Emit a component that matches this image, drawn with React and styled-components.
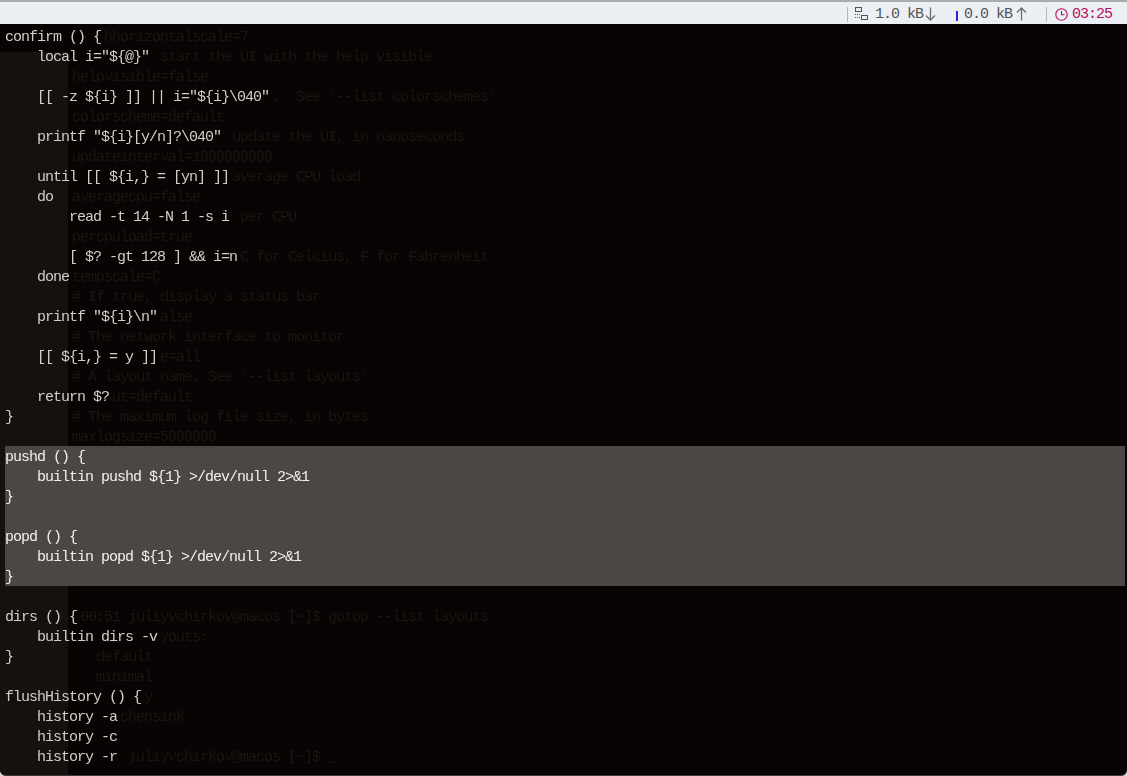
import styled, { createGlobalStyle } from "styled-components";

const CELL = 8;
const TEXT_X = 5;
const GHOST_X = 72;

const GlobalStyle = createGlobalStyle`
  html, body {
    margin: 0;
    padding: 0;
    background: #0a0303;
    overflow: hidden;
  }
`;

const Screen = styled.div`
  width: 1127px;
  height: 776px;
  display: flex;
  flex-direction: column;
  overflow: hidden;
  background: #d8dadd;
`;

const TopBar = styled.div`
  height: 24px;
  flex-shrink: 0;
  box-sizing: border-box;
  padding: 2px 15px 0 0;
  border-top: 2px solid #a9abad;
  background: #eceff4;
  display: flex;
  justify-content: flex-end;
  align-items: center;
  color: #50545a;
  font-family: "Liberation Mono", monospace;
  font-size: 15px;
  letter-spacing: -1px;
`;

const Widget = styled.div`
  display: flex;
  align-items: center;
  gap: ${(props) => props.$gap}px;
  margin-left: ${(props) => props.$left}px;
  white-space: pre;
  color: ${(props) => props.$color || "inherit"};
`;

const Divider = styled.span`
  width: 1px;
  height: 15px;
  margin-left: ${(props) => props.$left || 0}px;
  background: #b4b7bc;
`;

const Tick = styled.span`
  width: 2px;
  height: 10px;
  margin-top: 3px;
  margin-left: 20px;
  background: #3a20e0;
`;

const NetworkSvg = styled.svg`
  margin-right: 5px;
`;

const Terminal = styled.div`
  position: relative;
  flex: 1;
  overflow: hidden;
  background: #0a0303;
  border-bottom: 1px solid #3c3a3a;
  border-radius: 0 0 6px 6px;
  font-family: "Liberation Mono", monospace;
  font-size: 15px;
  letter-spacing: -1px;
  line-height: 20px;
`;

const BackdropEdge = styled.div`
  position: absolute;
  left: 0;
  top: 28px;
  bottom: 0;
  width: 68px;
  background: #16110f;
`;

const Code = styled.div`
  position: relative;
  padding: 4px 2px 0 ${TEXT_X}px;
`;

const Row = styled.div`
  display: flex;
  height: 20px;
  white-space: pre;
`;

const Main = styled.span`
  color: ${(props) => (props.$selected ? "#f2f0ec" : "#d2cec9")};
  filter: blur(0.3px);
`;

const Ghost = styled.span`
  color: #1b1513;
  filter: blur(0.3px);
`;

const Selection = styled.div`
  height: 140px;
  margin: -2px 0 2px;
  padding-top: 2px;
  box-sizing: border-box;
  background: #4b4745;
`;

const rows = [
  { text: "confirm () {", ghost: "hhorizontalscale=7", col: 4 },
  { text: '    local i="${@}"', ghost: "start the UI with the help visible", col: 11 },
  { text: "", ghost: "helpvisible=false", col: 0 },
  { text: '    [[ -z ${i} ]] || i="${i}\\040"', ghost: ".  See `--list colorschemes`", col: 25 },
  { text: "", ghost: "colorscheme=default", col: 0 },
  { text: '    printf "${i}[y/n]?\\040"', ghost: "update the UI, in nanoseconds", col: 20 },
  { text: "", ghost: "updateinterval=1000000000", col: 0 },
  { text: "    until [[ ${i,} = [yn] ]]", ghost: "average CPU load", col: 20 },
  { text: "    do", ghost: "averagecpu=false", col: 0 },
  { text: "        read -t 14 -N 1 -s i", ghost: "per CPU", col: 21 },
  { text: "", ghost: "percpuload=true", col: 0 },
  { text: "        [ $? -gt 128 ] && i=n", ghost: "C for Celcius, F for Fahrenheit", col: 21 },
  { text: "    done", ghost: "tempscale=C", col: 0 },
  { text: "", ghost: "# If true, display a status bar", col: 0 },
  { text: '    printf "${i}\\n"', ghost: "alse", col: 11 },
  { text: "", ghost: "# The network interface to monitor", col: 0 },
  { text: "    [[ ${i,} = y ]]", ghost: "e=all", col: 11 },
  { text: "", ghost: "# A layout name. See `--list layouts`", col: 0 },
  { text: "    return $?", ghost: "ut=default", col: 5 },
  { text: "}", ghost: "# The maximum log file size, in bytes", col: 0 },
  { text: "", ghost: "maxlogsize=5000000", col: 0 },
];

const selectedRows = [
  "pushd () {",
  "    builtin pushd ${1} >/dev/null 2>&1",
  "}",
  "",
  "popd () {",
  "    builtin popd ${1} >/dev/null 2>&1",
  "}",
];

const lowerRows = [
  { text: "" },
  { text: "dirs () {", ghost: "00:51 juliyvchirkov@macos [~]$ gotop --list layouts", col: 1 },
  { text: "    builtin dirs -v", ghost: "youts:", col: 11 },
  { text: "}", ghost: "default", col: 3 },
  { text: "", ghost: "minimal", col: 3 },
  { text: "flushHistory () {", ghost: "y", col: 9 },
  { text: "    history -a", ghost: "chensink", col: 6 },
  { text: "    history -c" },
  { text: "    history -r", ghost: "juliyvchirkov@macos [~]$ _", col: 7 },
];

function CodeRow({ text, ghost, col, selected }) {
  // the window behind keeps its own grid, so the offset depends on the line in front
  const offset = GHOST_X + col * CELL - TEXT_X - text.length * CELL;
  return (
    <Row>
      <Main $selected={selected}>{text}</Main>
      {ghost && <Ghost style={{ marginLeft: offset }}>{ghost}</Ghost>}
    </Row>
  );
}

function NetworkIcon() {
  return (
    <NetworkSvg width="13" height="14" viewBox="0 0 13 14" fill="none" stroke="#50545a">
      <rect x="0.5" y="0.5" width="6" height="4" />
      <rect x="6.5" y="8.5" width="6" height="4" />
      <path d="M0 7.5h1M2 7.5h1M4 7.5h1M0 10.5h1M2 10.5h1M4 10.5h1" />
    </NetworkSvg>
  );
}

function ArrowDown() {
  return (
    <svg width="11" height="14" viewBox="0 0 11 14" fill="none" stroke="#6b6f75" strokeWidth="1.3">
      <path d="M5.5 0.5v12.5M1 8.5l4.5 4.5l4.5-4.5" />
    </svg>
  );
}

function ArrowUp() {
  return (
    <svg width="11" height="14" viewBox="0 0 11 14" fill="none" stroke="#6b6f75" strokeWidth="1.3">
      <path d="M5.5 13.5v-12.5M1 5.5l4.5-4.5l4.5 4.5" />
    </svg>
  );
}

function ClockIcon() {
  return (
    <svg width="13" height="13" viewBox="0 0 13 13" fill="none" stroke="#b5105e" strokeWidth="1.1">
      <circle cx="6.5" cy="6.5" r="5.7" />
      <path d="M6.5 3v3.8h3" />
    </svg>
  );
}

function App() {
  return (
    <Screen>
      <GlobalStyle />
      <TopBar>
        <Divider />
        <Widget $left={7} $gap={2}>
          <NetworkIcon />
          <span>1.0 kB</span>
          <ArrowDown />
        </Widget>
        <Tick />
        <Widget $left={6} $gap={4}>
          <span>0.0 kB</span>
          <ArrowUp />
        </Widget>
        <Divider $left={19} />
        <Widget $left={8} $gap={4} $color="#b5105e">
          <ClockIcon />
          <span>03:25</span>
        </Widget>
      </TopBar>
      <Terminal>
        <BackdropEdge />
        <Code>
          {rows.map((v, i) => (
            <CodeRow key={i} {...v} />
          ))}
          <Selection>
            {selectedRows.map((v, i) => (
              <CodeRow key={i} text={v} selected />
            ))}
          </Selection>
          {lowerRows.map((v, i) => (
            <CodeRow key={i} {...v} />
          ))}
        </Code>
      </Terminal>
    </Screen>
  );
}

export default App;
